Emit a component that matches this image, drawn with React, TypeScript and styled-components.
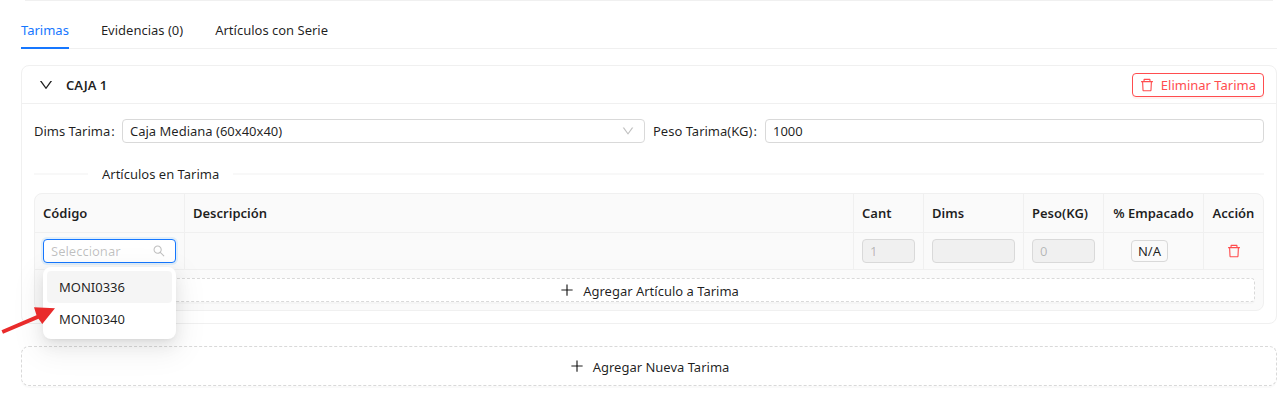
import React from "react";
import styled, { createGlobalStyle, css } from "styled-components";
import { AiOutlineDelete, AiOutlineDown, AiOutlinePlus, AiOutlineSearch } from "react-icons/ai";

const ink = "rgba(0, 0, 0, 0.88)";
const faint = "rgba(0, 0, 0, 0.25)";
const line = "#f0f0f0";
const edge = "#d9d9d9";
const blue = "#1677ff";
const red = "#ff4d4f";

const GlobalStyle = createGlobalStyle`
  *, *::before, *::after { box-sizing: border-box; }
  body {
    margin: 0;
    background: #fff;
    color: ${ink};
    font-family: "Segoe UI", "Noto Sans", "Open Sans", sans-serif;
    font-size: 13px;
    line-height: 22px;
  }
  button, input, select { font: inherit; color: inherit; margin: 0; }
  svg { display: block; flex: none; }
`;

const Page = styled.main`
  padding: 0 7px 26px 21px;
`;

const SectionEnd = styled.hr`
  margin: 0 4px;
  border: 0;
  border-top: 1px solid ${line};
`;

const Tabs = styled.div`
  display: flex;
  gap: 32px;
  margin-bottom: 16px;
  padding-top: 12px;
  border-bottom: 1px solid ${line};
`;

const Tab = styled.button<{ $active?: boolean }>`
  margin-bottom: -1px;
  padding: 6px 0;
  border: 0;
  border-bottom: 2px solid ${(p) => (p.$active ? blue : "transparent")};
  background: none;
  color: ${(p) => (p.$active ? blue : ink)};
  cursor: pointer;
`;

const Card = styled.section`
  border: 1px solid ${line};
  border-radius: 8px;
`;

const CardHeader = styled.header`
  display: flex;
  align-items: center;
  justify-content: space-between;
  height: 38px;
  padding: 0 12px 0 16px;
  border-bottom: 1px solid ${line};
`;

const Collapse = styled.button`
  display: flex;
  align-items: center;
  gap: 12px;
  padding: 0;
  border: 0;
  background: none;
  font-weight: 600;
  cursor: pointer;
`;

const CardBody = styled.div`
  padding: 15px 12px 12px;
`;

const Button = styled.button<{ $large?: boolean }>`
  display: flex;
  align-items: center;
  justify-content: center;
  height: ${(p) => (p.$large ? 40 : 24)}px;
  padding: 0 7px;
  border: 1px solid ${edge};
  border-radius: ${(p) => (p.$large ? 8 : 4)}px;
  background: #fff;
  cursor: pointer;
`;

const DangerButton = styled(Button)`
  gap: 6px;
  padding: 0 7px 0 6px;
  border-color: ${red};
  color: ${red};
  box-shadow: 0 2px 0 rgba(255, 38, 5, 0.06);
`;

const AddButton = styled(Button)`
  gap: 8px;
  width: 100%;
  border-style: dashed;
  box-shadow: 0 2px 0 rgba(0, 0, 0, 0.02);
`;

const AddLabel = styled.span`
  padding-top: 2px;
`;

const Fields = styled.div`
  display: grid;
  grid-template-columns: 1fr 1fr;
  gap: 8px;
`;

const Field = styled.div`
  display: flex;
  align-items: center;
  gap: 8px;
`;

const Label = styled.label<{ $width: number }>`
  flex: 0 0 ${(p) => p.$width}px;
  min-width: 0;
  white-space: nowrap;
  &::after {
    content: ":";
    margin-left: 1px;
  }
`;

const control = css`
  width: 100%;
  min-width: 0;
  height: 24px;
  padding: 0 7px;
  border: 1px solid ${edge};
  border-radius: 4px;
  background: #fff;
  outline: 0;
`;

const Input = styled.input`
  ${control}
  display: block;
  &:disabled {
    background: rgba(0, 0, 0, 0.04);
    color: ${faint};
  }
`;

const SelectBox = styled.div`
  position: relative;
  flex: 1;
  min-width: 0;
`;

const Select = styled.select`
  ${control}
  display: block;
  appearance: none;
`;

const Suffix = styled.span`
  position: absolute;
  top: 5px;
  right: 10px;
  color: ${faint};
  pointer-events: none;
`;

const Divider = styled.div`
  display: flex;
  align-items: center;
  gap: 14px;
  margin: 20px 0 8px;
  &::before, &::after {
    content: "";
    height: 2px;
    background: #f8f8f8;
  }
  &::before { flex: 0 0 54px; }
  &::after { flex: 1; }
`;

const TableFrame = styled.div`
  border: 1px solid ${line};
  border-radius: 8px;
  background: #fafafa;
`;

const Table = styled.table`
  width: 100%;
  table-layout: fixed;
  border-collapse: separate;
  border-spacing: 0;
`;

const cell = css`
  padding: 0 8px;
  border-right: 1px solid ${line};
  border-bottom: 1px solid ${line};
  &:last-child { border-right: 0; }
`;

const Th = styled.th<{ $width?: number; $center?: boolean }>`
  ${cell}
  width: ${(p) => (p.$width ? `${p.$width}px` : "auto")};
  height: 39px;
  font-weight: 600;
  text-align: ${(p) => (p.$center ? "center" : "left")};
  white-space: nowrap;
`;

const Td = styled.td`
  ${cell}
  height: 37px;
`;

const Centered = styled.div`
  display: flex;
  justify-content: center;
`;

const Tag = styled.span`
  margin-right: 8px;
  padding: 0 6px;
  border: 1px solid ${edge};
  border-radius: 4px;
  line-height: 20px;
`;

const IconButton = styled.button`
  padding: 0;
  border: 0;
  background: none;
  color: ${red};
  cursor: pointer;
`;

const TableFooter = styled.div`
  padding: 8px;
`;

const Combo = styled.div`
  position: relative;
`;

const ComboInput = styled(Input)`
  padding-right: 24px;
  border-color: ${blue};
  box-shadow: 0 0 0 2px rgba(5, 145, 255, 0.1);
  &::placeholder { color: ${faint}; opacity: 1; }
`;

const Menu = styled.ul`
  position: absolute;
  z-index: 2;
  top: 28px;
  left: 0;
  width: 100%;
  margin: 0;
  padding: 4px;
  list-style: none;
  border-radius: 8px;
  background: #fff;
  box-shadow: 0 6px 16px 0 rgba(0, 0, 0, 0.08), 0 3px 6px -4px rgba(0, 0, 0, 0.12),
    0 9px 28px 8px rgba(0, 0, 0, 0.05);
`;

const Option = styled.li<{ $active?: boolean }>`
  padding: 5px 12px;
  border-radius: 4px;
  background: ${(p) => (p.$active ? "rgba(0, 0, 0, 0.04)" : "transparent")};
`;

const Pointer = styled.svg`
  position: absolute;
  z-index: 3;
  top: 66px;
  left: -43px;
  pointer-events: none;
`;

const AddTarima = styled.div`
  margin-top: 22px;
`;

export default function App() {
  return (
    <>
      <GlobalStyle />
      <Page>
        <SectionEnd />
        <Tabs role="tablist">
          <Tab role="tab" aria-selected $active>Tarimas</Tab>
          <Tab role="tab">Evidencias (0)</Tab>
          <Tab role="tab">Artículos con Serie</Tab>
        </Tabs>

        <Card>
          <CardHeader>
            <Collapse aria-expanded>
              <AiOutlineDown size={16} />
              CAJA 1
            </Collapse>
            <DangerButton>
              <AiOutlineDelete size={16} />
              Eliminar Tarima
            </DangerButton>
          </CardHeader>

          <CardBody>
            <Fields>
              <Field>
                <Label $width={80} htmlFor="dims">Dims Tarima</Label>
                <SelectBox>
                  <Select id="dims" defaultValue="m">
                    <option value="m">Caja Mediana (60x40x40)</option>
                  </Select>
                  <Suffix><AiOutlineDown size={14} /></Suffix>
                </SelectBox>
              </Field>
              <Field>
                <Label $width={104} htmlFor="peso">Peso Tarima(KG)</Label>
                <Input id="peso" defaultValue="1000" />
              </Field>
            </Fields>

            <Divider>Artículos en Tarima</Divider>

            <TableFrame>
              <Table>
                <thead>
                  <tr>
                    <Th $width={150}>Código</Th>
                    <Th>Descripción</Th>
                    <Th $width={70}>Cant</Th>
                    <Th $width={100}>Dims</Th>
                    <Th $width={80}>Peso(KG)</Th>
                    <Th $width={100} $center>% Empacado</Th>
                    <Th $width={59} $center>Acción</Th>
                  </tr>
                </thead>
                <tbody>
                  <tr>
                    <Td>
                      <Combo>
                        <ComboInput role="combobox" aria-expanded aria-label="Código" aria-controls="codes" placeholder="Seleccionar" />
                        <Suffix><AiOutlineSearch size={14} /></Suffix>
                        <Menu id="codes" role="listbox">
                          <Option role="option" $active>MONI0336</Option>
                          <Option role="option">MONI0340</Option>
                        </Menu>
                        <Pointer width="58" height="32" viewBox="0 0 58 32" aria-hidden>
                          <path d="M1.5 25.2 36.5 10.2 34 2.3 55 3.3 42.3 19 38.5 13.8 3 28.8Z" fill="#e92b2b" />
                        </Pointer>
                      </Combo>
                    </Td>
                    <Td />
                    <Td><Input aria-label="Cant" defaultValue="1" disabled /></Td>
                    <Td><Input aria-label="Dims" disabled /></Td>
                    <Td><Input aria-label="Peso(KG)" defaultValue="0" disabled /></Td>
                    <Td><Centered><Tag>N/A</Tag></Centered></Td>
                    <Td>
                      <Centered>
                        <IconButton aria-label="Eliminar artículo"><AiOutlineDelete size={16} /></IconButton>
                      </Centered>
                    </Td>
                  </tr>
                </tbody>
              </Table>
              <TableFooter>
                <AddButton><AiOutlinePlus size={16} /><AddLabel>Agregar Artículo a Tarima</AddLabel></AddButton>
              </TableFooter>
            </TableFrame>
          </CardBody>
        </Card>

        <AddTarima>
          <AddButton $large><AiOutlinePlus size={16} /><AddLabel>Agregar Nueva Tarima</AddLabel></AddButton>
        </AddTarima>
      </Page>
    </>
  );
}
